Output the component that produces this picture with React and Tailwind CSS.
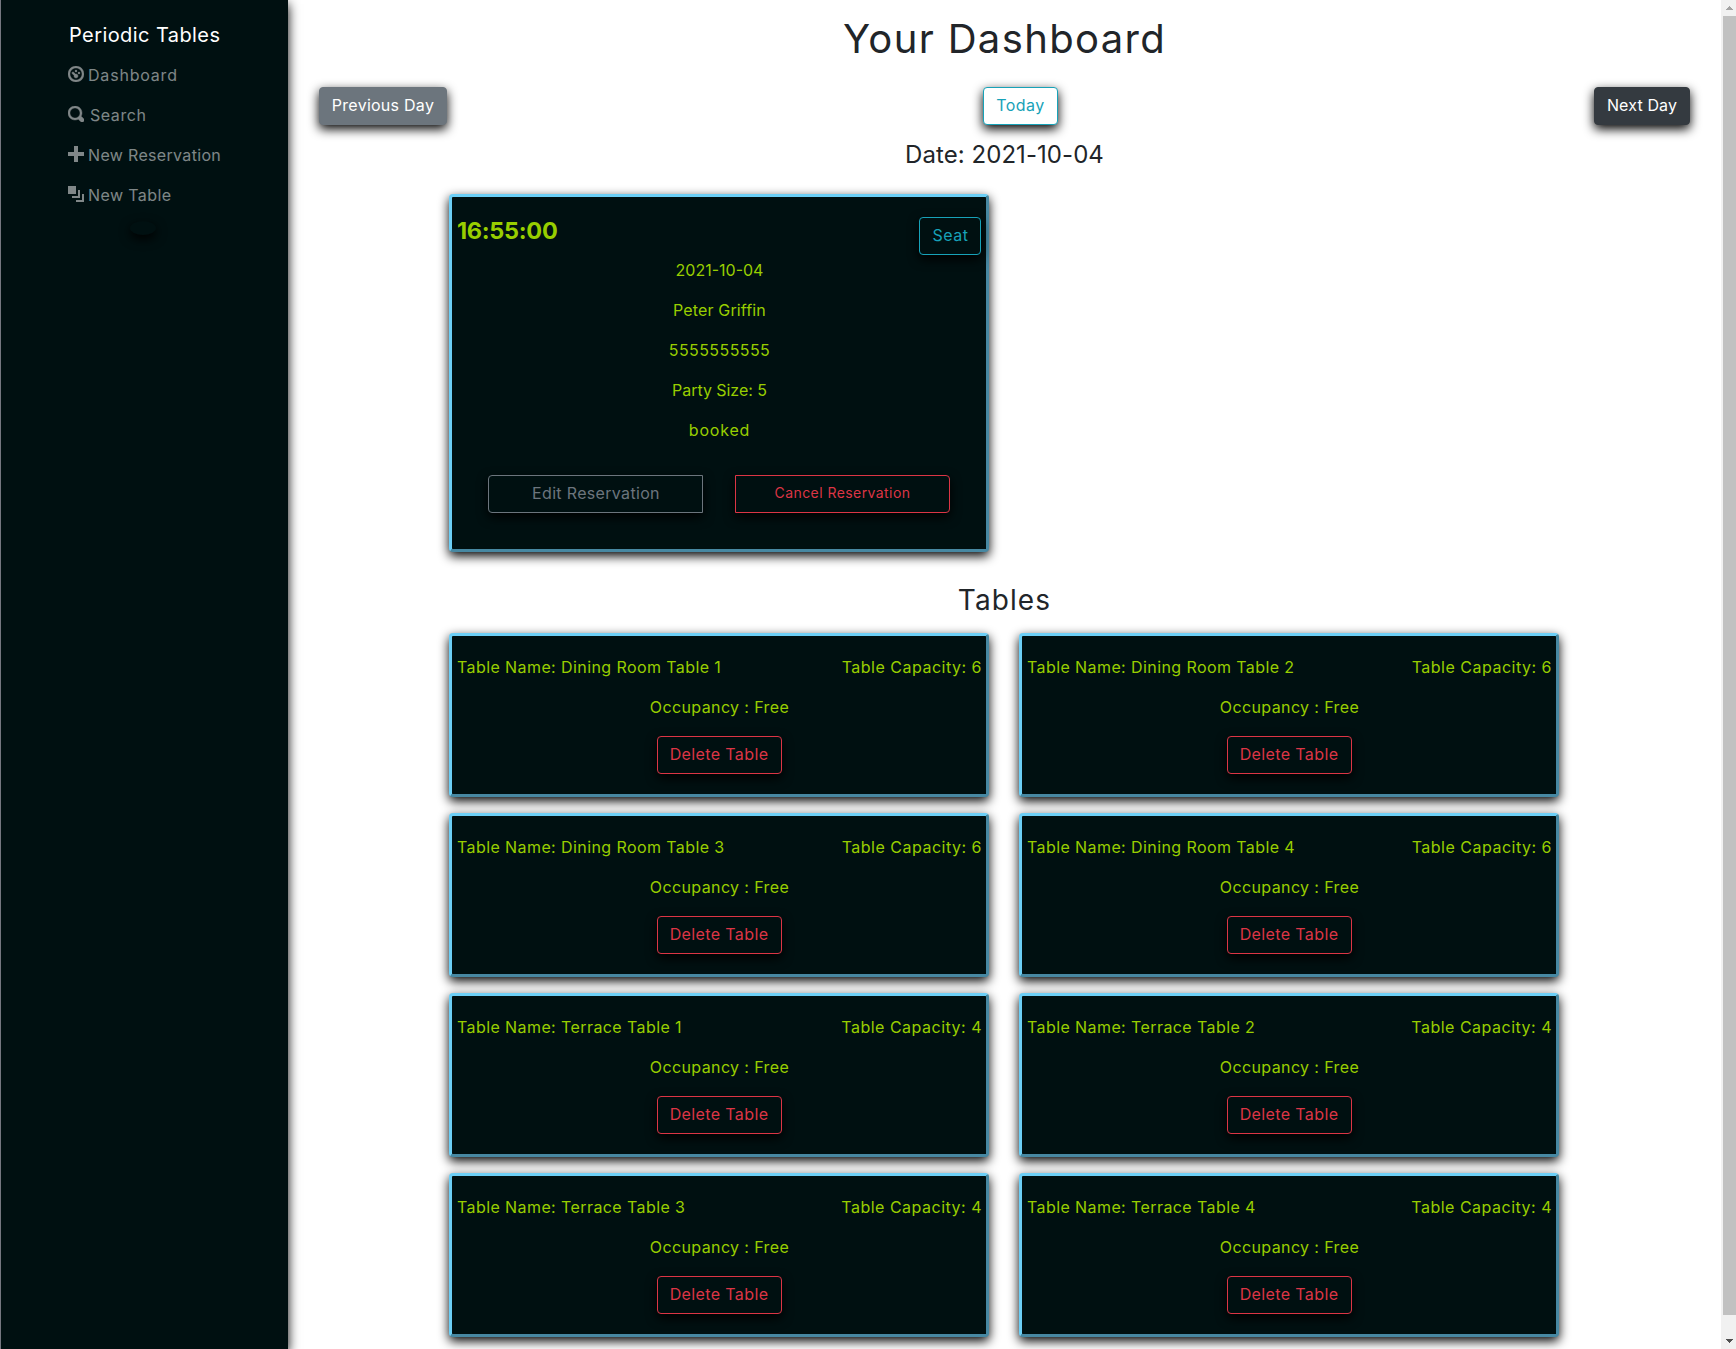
import React from "react";

const shadow = "shadow-[0_4px_11px_0_#000]";

const icons = {
  dashboard:
    "M4 0c-2.2 0-4 1.8-4 4s1.8 4 4 4 4-1.8 4-4-1.8-4-4-4zm0 1c1.66 0 3 1.34 3 3s-1.34 3-3 3-3-1.34-3-3 1.34-3 3-3zm0 1c-.28 0-.5.22-.5.5s.22.5.5.5.5-.22.5-.5-.22-.5-.5-.5zm-1.66 1a.5.5 0 0 0-.19.84l.91.91c-.02.08-.06.16-.06.25 0 .55.45 1 1 1s1-.45 1-1-.45-1-1-1c-.09 0-.17.04-.25.06l-.91-.91a.5.5 0 0 0-.44-.16.5.5 0 0 0-.06 0zm3.16 0c-.28 0-.5.22-.5.5s.22.5.5.5.5-.22.5-.5-.22-.5-.5-.5z",
  search:
    "M3.5 0c-1.93 0-3.5 1.57-3.5 3.5s1.57 3.5 3.5 3.5c.59 0 1.17-.14 1.66-.41a1 1 0 0 0 .13.13l1 1a1.02 1.02 0 1 0 1.44-1.44l-1-1a1 1 0 0 0-.16-.13c.27-.49.44-1.06.44-1.66 0-1.93-1.55-3.5-3.5-3.5zm0 1c1.39 0 2.5 1.11 2.5 2.5 0 .66-.24 1.27-.66 1.72-.01.01-.02.02-.03.03a1 1 0 0 0-.13.13c-.44.4-1.04.63-1.69.63-1.39 0-2.5-1.11-2.5-2.5s1.11-2.5 2.5-2.5z",
  plus: "M3 0v3h-3v2h3v3h2v-3h3v-2h-3v-3h-2z",
  layers: "M0 0v4h4v-4h-4zm5 2v3h-3v1h4v-4h-1zm2 2v3h-3v1h4v-4h-1z",
};

const links = [
  { label: "Dashboard", icon: icons.dashboard, weight: 0.2, cls: "ml-1 tracking-[0.8px]" },
  { label: "Search", icon: icons.search, weight: 0.2, cls: "ml-1.5 tracking-[0.55px]" },
  { label: "New Reservation", icon: icons.plus, weight: 0, cls: "ml-1 tracking-[0.33px]" },
  { label: "New Table", icon: icons.layers, weight: 0, cls: "ml-1 tracking-[0.4px]" },
];

const details = [
  { text: "2021-10-04", cls: "" },
  { text: "Peter Griffin", cls: "tracking-[0.15px]" },
  { text: "5555555555", cls: "tracking-[0.42px]" },
  { text: "Party Size: 5", cls: "tracking-[-0.05px]" },
  { text: "booked", cls: "tracking-[0.8px]" },
];

const tables = [
  ["Dining Room Table 1", 6],
  ["Dining Room Table 2", 6],
  ["Dining Room Table 3", 6],
  ["Dining Room Table 4", 6],
  ["Terrace Table 1", 4],
  ["Terrace Table 2", 4],
  ["Terrace Table 3", 4],
  ["Terrace Table 4", 4],
];

function Button({ className, children }) {
  return (
    <button
      className={`flex h-[38px] shrink-0 items-center justify-center whitespace-nowrap border pb-[3px] ${shadow} ${className}`}
    >
      {children}
    </button>
  );
}

function Card({ className, children }) {
  return (
    <div
      className={`w-[540px] rounded-[4px] border-[3px] border-[#6ccff6] bg-[#001011] px-[5px] text-[#98ce00] [border-style:outset] ${shadow} ${className}`}
    >
      {children}
    </div>
  );
}

function Sidebar() {
  return (
    <nav
      className={`w-[288px] shrink-0 border-l border-[#757780] bg-[#001011] pl-[67px] text-white/50 ${shadow}`}
    >
      <div className="mt-5 flex h-[30px] items-center pl-px text-xl tracking-[0.42px] text-white">
        Periodic Tables
      </div>
      <ul className="mt-[5px]">
        {links.map((l) => (
          <li key={l.label} className="flex h-10 items-center">
            <svg viewBox="0 0 8 8" className="-mt-[2px] size-4 text-[#808788]">
              <path d={l.icon} fill="currentColor" stroke="currentColor" strokeWidth={l.weight} />
            </svg>
            <span className={l.cls}>{l.label}</span>
          </li>
        ))}
      </ul>
      <div className={`ml-[62px] mt-[6px] h-[14px] w-[26px] rounded-[50%] bg-[#001011] ${shadow}`} />
    </nav>
  );
}

function Scrollbar() {
  return (
    <div className="flex w-[15px] shrink-0 flex-col bg-[#f1f1f1] pl-[2px]">
      <div className="flex h-4 items-center justify-center">
        <svg viewBox="0 0 7 4" className="h-1 w-[7px] fill-[#a3a3a3]">
          <path d="M3 0h1v1h1v1h1v1h1v1h-7v-1h1v-1h1v-1h1z" />
        </svg>
      </div>
      <div className="h-[1299px] bg-[#c1c1c1]" />
      <div className="flex grow items-center justify-center pt-[18px]">
        <svg viewBox="0 0 7 4" className="h-1 w-[7px] fill-[#505050]">
          <path d="M0 0h7v1h-1v1h-1v1h-1v1h-1v-1h-1v-1h-1v-1h-1z" />
        </svg>
      </div>
    </div>
  );
}

export default function App() {
  return (
    <div className="flex h-[1349px] overflow-hidden bg-white font-['Inter',sans-serif] text-base leading-6 text-[#212529]">
      <Sidebar />
      <main className="flex grow flex-col">
        <h1 className="mt-[15px] h-12 text-center text-[40px] leading-[48px] tracking-[1.35px]">
          Your Dashboard
        </h1>
        <div className="mt-6 flex justify-between px-[31px]">
          <Button className="w-32 rounded-[4px] border-[#6c757d] bg-[#6c757d] tracking-[0.26px] text-white">
            Previous Day
          </Button>
          <Button className="w-[75px] rounded-[4px] border-[#17a2b8] bg-white tracking-[0.5px] text-[#17a2b8]">
            Today
          </Button>
          <Button className="w-24 rounded-[4px] border-[#343a40] bg-[#343a40] tracking-[0.13px] text-white">
            Next Day
          </Button>
        </div>
        <h4 className="mt-[15px] h-[29px] text-center text-2xl leading-[29px] tracking-[0.06px]">
          Date: 2021-10-04
        </h4>

        <Card className="ml-[161px] mt-[25px] h-[358px]">
          <div className="flex h-[61px] justify-between pt-5">
            <h4 className="h-[29px] text-[23.5px] font-bold leading-[27px] tracking-[-0.3px]">
              16:55:00
            </h4>
            <Button className="w-[62px] rounded-[4px] border-[#17a2b8] pl-px tracking-[0.45px] text-[#17a2b8]">
              Seat
            </Button>
          </div>
          <div className="flex flex-col gap-4 pl-px text-center">
            {details.map((d) => (
              <p key={d.text} className={d.cls}>
                {d.text}
              </p>
            ))}
          </div>
          <div className="mt-[33px] flex gap-8 px-[31px]">
            <Button className="w-[215px] rounded-l-[4px] border-[#6c757d] pl-px tracking-[0.33px] text-[#6c757d]">
              Edit Reservation
            </Button>
            <Button className="w-[215px] rounded-r-[4px] border-[#dc3545] text-sm tracking-[0.43px] text-[#dc3545]">
              Cancel Reservation
            </Button>
          </div>
        </Card>

        <h3 className="mt-[31px] h-[34px] text-center text-[28px] leading-[34px] tracking-[1.1px]">
          Tables
        </h3>
        <div className="ml-[161px] mt-4 grid grid-cols-[540px_540px] gap-x-[30px] gap-y-4">
          {tables.map(([name, capacity]) => (
            <Card key={name} className="h-[164px] pt-[19px]">
              <div className="flex justify-between">
                <p className="tracking-[0.41px]">Table Name: {name}</p>
                <p className="-mr-px tracking-[0.5px]">Table Capacity: {capacity}</p>
              </div>
              <p className="mt-4 pl-px text-center tracking-[0.38px]">Occupancy : Free</p>
              <Button className="mx-auto mt-[17px] w-[125px] rounded-[4px] border-[#dc3545] tracking-[0.38px] text-[#dc3545]">
                Delete Table
              </Button>
            </Card>
          ))}
        </div>
      </main>
      <Scrollbar />
    </div>
  );
}
